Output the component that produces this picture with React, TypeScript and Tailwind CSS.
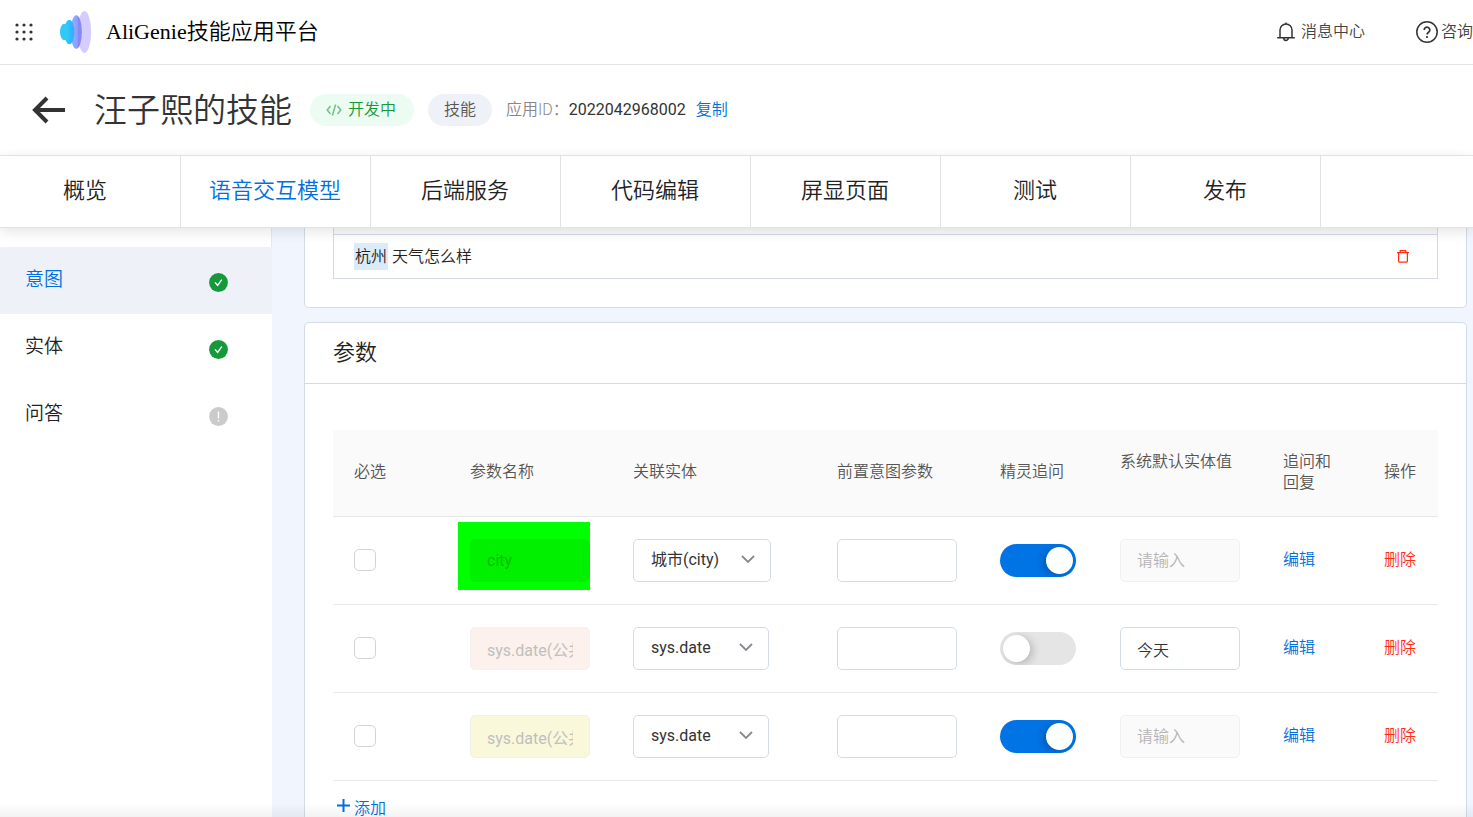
import React from "react";

const tabs = ["概览", "语音交互模型", "后端服务", "代码编辑", "屏显页面", "测试", "发布"];

const sideItems = [
  { label: "意图", done: true, active: true },
  { label: "实体", done: true, active: false },
  { label: "问答", done: false, active: false },
];

type Param = {
  id: number;
  name: string;
  nameClass: string;
  entity: string;
  selectClass: string;
  ask: boolean;
  value: string;
  marked?: boolean;
};

const params: Param[] = [
  {
    id: 1,
    name: "city",
    nameClass: "border-[#00f000] bg-[#00f000] text-[#00b900]",
    entity: "城市(city)",
    selectClass: "w-[138px]",
    ask: true,
    value: "",
    marked: true,
  },
  {
    id: 2,
    name: "sys.date(公共实体)",
    nameClass: "border-[#f3f1f1] bg-[#fcf1ec] text-[#bfbfbf]",
    entity: "sys.date",
    selectClass: "w-[136px]",
    ask: false,
    value: "今天",
  },
  {
    id: 3,
    name: "sys.date(公共实体)",
    nameClass: "border-[#f1f1ea] bg-[#faf8da] text-[#bfbfbf]",
    entity: "sys.date",
    selectClass: "w-[136px]",
    ask: true,
    value: "",
  },
];

const fieldBase = "block h-[43px] w-[120px] rounded-[5px] border px-4 pt-px text-base";

function AppsIcon() {
  return (
    <svg width="18" height="18" viewBox="0 0 18 18" fill="#333">
      {[2, 9, 16].map((y) => [2, 9, 16].map((x) => <circle key={`${x}-${y}`} cx={x} cy={y} r="1.6" />))}
    </svg>
  );
}

function Logo() {
  return (
    <svg width="32" height="42" viewBox="0 0 32 42">
      <defs>
        <linearGradient id="wave" x1="0" x2="1">
          <stop offset="0" stopColor="#2fd0fa" />
          <stop offset="0.6" stopColor="#2fbcff" />
          <stop offset="1" stopColor="#3aa6ff" />
        </linearGradient>
        <linearGradient id="wave2" x1="0" x2="1">
          <stop offset="0" stopColor="#8fb0ff" />
          <stop offset="0.6" stopColor="#8f9dff" />
          <stop offset="0.65" stopColor="#8088f4" />
          <stop offset="1" stopColor="#8a8bf6" />
        </linearGradient>
      </defs>
      <ellipse cx="24.4" cy="21" rx="6.7" ry="21" fill="#d5cdfd" />
      <ellipse cx="16.3" cy="21" rx="5.6" ry="16.8" fill="url(#wave2)" />
      <ellipse cx="4.3" cy="21" rx="4.3" ry="8.3" fill="#2ec9f8" />
      <ellipse cx="9.3" cy="21" rx="5" ry="12.2" fill="url(#wave)" />
    </svg>
  );
}

function BellIcon() {
  return (
    <svg width="18" height="20" viewBox="0 0 18 20" fill="none" stroke="#333" strokeWidth="1.5">
      <path d="M9 0.5v1.5M3 15.5V8a6 6 0 0 1 12 0v7.5M0.2 15.7h17.6M6.8 16.2a2.2 2.2 0 0 0 4.4 0" />
    </svg>
  );
}

function HelpIcon() {
  return (
    <svg width="22" height="22" viewBox="0 0 22 22" fill="none" stroke="#333" strokeWidth="1.5">
      <circle cx="11" cy="11" r="10.2" />
      <path d="M8.2 8.9a2.8 2.8 0 1 1 4.4 2.3c-1 .7-1.6 1.2-1.6 2.3" strokeWidth="1.7" />
      <circle cx="11" cy="16" r="1.1" fill="#333" stroke="none" />
    </svg>
  );
}

function BackIcon() {
  return (
    <svg width="34" height="28" viewBox="0 0 34 28" fill="none" stroke="#333" strokeWidth="4">
      <path d="M33 14H3M15 2 3 14l12 12" />
    </svg>
  );
}

function CodeIcon() {
  return (
    <svg width="16" height="12" viewBox="0 0 16 12" fill="none" stroke="#6cc287" strokeWidth="1.5">
      <path d="M4.5 2 1.2 6l3.3 4M11.5 2l3.3 4-3.3 4M9.6 0.5 6.4 11.5" />
    </svg>
  );
}

function StatusIcon({ done }: { done: boolean }) {
  return (
    <svg width="19" height="19" viewBox="0 0 19 19" fill="none">
      <circle cx="9.5" cy="9.5" r="9.4" fill={done ? "#16983b" : "#cbcbcb"} />
      {done ? (
        <path d="m6 9.4 2.6 3 4.2-5.8" stroke="#fff" strokeWidth="1.4" />
      ) : (
        <path d="M9.5 4.5v7M9.5 13v1.6" stroke="#fff" strokeWidth="1.3" />
      )}
    </svg>
  );
}

function TrashIcon() {
  return (
    <svg width="12" height="13" viewBox="0 0 12 13" fill="none" stroke="#ff2d16" strokeWidth="1.2">
      <path d="M0 2.6h12M3.2 2.4V.7h5.6v1.7M1.6 2.6v8.6q0 1 1 1h6.8q1 0 1-1V2.6" />
    </svg>
  );
}

function TopBar() {
  return (
    <header className="flex h-[65px] shrink-0 items-center border-b border-[#e6e6e6] pl-[15px]">
      <button type="button" aria-label="应用">
        <AppsIcon />
      </button>
      <a href="#home" className="ml-[27px] flex items-center gap-[14px] text-black">
        <Logo />
        <span className="pb-[2px] font-['Liberation_Serif','Noto_Sans_CJK_SC',serif] text-[22px] font-[350]">
          AliGenie技能应用平台
        </span>
      </a>
      <div className="ml-auto flex items-center gap-[51px] font-[350] text-[#444]">
        <a href="#messages" className="flex items-center gap-[6px]">
          <BellIcon />
          消息中心
        </a>
        <a href="#help" className="flex items-center gap-[3px] whitespace-nowrap">
          <HelpIcon />
          咨询
        </a>
      </div>
    </header>
  );
}

function TitleBar() {
  return (
    <div className="flex h-[90px] shrink-0 items-center pl-8">
      <button type="button" aria-label="返回">
        <BackIcon />
      </button>
      <h1 className="ml-7 text-[33px] leading-none font-[350] text-[#333]">汪子熙的技能</h1>
      <span className="ml-[18px] flex h-8 items-center gap-[6px] rounded-full bg-[#edfcf2] pr-[18px] pl-4 font-[350] text-[#16983b]">
        <CodeIcon />
        开发中
      </span>
      <span className="ml-[14px] flex h-8 items-center rounded-full bg-[#eef1f7] px-4 font-[350] text-[#555]">技能</span>
      <span className="ml-[14px] font-[350] text-[#888]">应用ID：</span>
      <span className="text-[#333]">2022042968002</span>
      <button type="button" className="ml-[10px] font-[350] text-[#0070e0]">
        复制
      </button>
    </div>
  );
}

function Tabs() {
  return (
    <nav className="relative z-10 flex h-[73px] shrink-0 border-y border-[#e2e2e2] bg-white shadow-[0_4px_12px_rgba(0,0,0,0.1)]">
      <div className="-ml-[9px] flex">
        {tabs.map((tab, i) => (
          <a
            key={tab}
            href={`#tab-${i}`}
            className={
              "flex w-[190px] items-center justify-center border-r border-[#e2e2e2] pr-px pb-[2px] text-[22px] font-[350] " +
              (i === 1 ? "text-[#0070e0]" : "text-[#222]")
            }
          >
            {tab}
          </a>
        ))}
      </div>
    </nav>
  );
}

function Sidebar() {
  return (
    <aside className="w-[272px] shrink-0 bg-white">
      <div className="h-[19px] border-r border-[#e3e9f1]" />
      {sideItems.map((item) => (
        <a
          key={item.label}
          href={`#${item.label}`}
          className={
            "flex h-[67px] items-center justify-between pr-11 pl-[25px] text-[19px] font-[350] " +
            (item.active ? "bg-[#eef1f7] text-[#0070e0]" : "text-[#222]")
          }
        >
          {item.label}
          <span className="pt-1">
            <StatusIcon done={item.done} />
          </span>
        </a>
      ))}
    </aside>
  );
}

function ParamRow({ p }: { p: Param }) {
  return (
    <tr className="h-[88px] border-b border-[#e8e8e8]">
      <td className="pl-[21px]">
        <input
          type="checkbox"
          aria-label={`必选 ${p.id}`}
          className="block size-[22px] appearance-none rounded-[5px] border border-[#cfd2d8] bg-white"
        />
      </td>
      <td className="pl-[21px]">
        <div className="relative w-[120px]">
          {p.marked && <span className="absolute -top-[17px] right-0 -bottom-2 -left-3 bg-[#00ff00]" />}
          <input
            disabled
            aria-label={`参数名称 ${p.id}`}
            defaultValue={p.name}
            className={`relative ${fieldBase} ${p.nameClass}`}
          />
        </div>
      </td>
      <td className="pl-[21px]">
        <div className={`relative ${p.selectClass}`}>
          <select
            aria-label={`关联实体 ${p.id}`}
            defaultValue={p.entity}
            className="block h-[43px] w-full appearance-none rounded-[5px] border border-[#d3dce6] bg-white px-[17px] text-base text-[#333]"
          >
            <option>{p.entity}</option>
          </select>
          <svg
            className="pointer-events-none absolute top-4 right-4"
            width="14"
            height="9"
            viewBox="0 0 14 9"
            fill="none"
            stroke="#85898e"
            strokeWidth="1.8"
          >
            <path d="m1 1 6 6 6-6" />
          </svg>
        </div>
      </td>
      <td className="pl-[21px]">
        <input aria-label={`前置意图参数 ${p.id}`} className={`${fieldBase} border-[#d3dce6] bg-white`} />
      </td>
      <td className="pl-[21px]">
        <input
          type="checkbox"
          role="switch"
          aria-label={`精灵追问 ${p.id}`}
          defaultChecked={p.ask}
          className="block h-[33px] w-[76px] appearance-none overflow-hidden rounded-full bg-[#e5e5e5] p-[3px] before:block before:size-[27px] before:rounded-full before:bg-white before:shadow-[3px_2px_8px_rgba(0,0,0,0.2)] before:content-[''] checked:bg-[#0073e5] checked:before:ml-auto checked:before:shadow-[-3px_2px_8px_rgba(0,0,0,0.2)]"
        />
      </td>
      <td className="pl-[21px]">
        <input
          disabled={p.ask}
          aria-label={`系统默认实体值 ${p.id}`}
          placeholder="请输入"
          defaultValue={p.value}
          className={`${fieldBase} border-[#d3dce6] font-[350] text-[#333] placeholder:text-[#b5b5b5] disabled:border-[#f0f0f0] disabled:bg-[#fafafa]`}
        />
      </td>
      <td className="pl-[21px]">
        <button type="button" className="font-[350] text-[#0070e0]">
          编辑
        </button>
      </td>
      <td className="pl-[21px]">
        <button type="button" className="font-[350] text-[#ff2d16]">
          删除
        </button>
      </td>
    </tr>
  );
}

function ParamTable() {
  const th = "pb-[2px] pl-[21px] text-left font-[350]";
  return (
    <table className="w-full table-fixed border-collapse">
      <colgroup>
        <col className="w-[116px]" />
        <col className="w-[163px]" />
        <col className="w-[204px]" />
        <col className="w-[163px]" />
        <col className="w-[120px]" />
        <col className="w-[163px]" />
        <col className="w-[101px]" />
        <col />
      </colgroup>
      <thead className="bg-[#fafafa] leading-[21px] text-[#555]">
        <tr className="h-[86px] border-b border-[#e8e8e8]">
          <th className={th}>必选</th>
          <th className={th}>参数名称</th>
          <th className={th}>关联实体</th>
          <th className={th}>前置意图参数</th>
          <th className={th}>精灵追问</th>
          <th className={th}>
            <div className="h-[42px] whitespace-nowrap">系统默认实体值</div>
          </th>
          <th className={`${th} pr-[21px]`}>追问和回复</th>
          <th className={th}>操作</th>
        </tr>
      </thead>
      <tbody>
        {params.map((p) => (
          <ParamRow key={p.id} p={p} />
        ))}
      </tbody>
    </table>
  );
}

export default function App() {
  return (
    <div className="flex h-screen flex-col overflow-hidden bg-white font-[Roboto,'Noto_Sans_CJK_SC',sans-serif] text-base">
      <TopBar />
      <TitleBar />
      <Tabs />
      <div className="relative flex min-h-0 flex-1 overflow-hidden">
        <Sidebar />
        <main className="flex min-w-0 flex-1 flex-col gap-[14px] overflow-hidden bg-[#f0f5fe] pr-[6px] pl-8">
          <section className="shrink-0 rounded-b-[5px] border border-t-0 border-[#d3dce6] bg-white px-7 pb-7">
            <div className="h-[7px] border border-t-0 border-[#d5d9e8] bg-[#fafafa]" />
            <div className="flex h-11 items-center justify-between border border-t-0 border-[#d5d9e8] pr-7 pl-5 font-[350] text-[#222]">
              <p className="flex items-center gap-1 leading-[27px]">
                <mark className="bg-[#daebfa] px-px text-[#222]">杭州</mark>
                天气怎么样
              </p>
              <button type="button" aria-label="删除语料">
                <TrashIcon />
              </button>
            </div>
          </section>
          <section className="min-h-[560px] shrink-0 rounded-[5px] border border-[#d3dce6] bg-white">
            <h2 className="flex h-[61px] items-center border-b border-[#d9d9d9] pb-[2px] pl-7 text-[22px] font-[350] text-[#222]">
              参数
            </h2>
            <div className="px-7 pt-[46px]">
              <ParamTable />
              <button type="button" className="mt-4 ml-1 flex items-center gap-1 font-[350] text-[#0070e0]">
                <svg className="mb-[6px]" width="13" height="13" viewBox="0 0 13 13" stroke="#0070e0" strokeWidth="2">
                  <path d="M6.5 0v13M0 6.5h13" />
                </svg>
                添加
              </button>
            </div>
          </section>
        </main>
        <div className="pointer-events-none absolute inset-x-0 bottom-0 h-[14px] bg-linear-to-t from-black/5 to-transparent" />
      </div>
    </div>
  );
}
